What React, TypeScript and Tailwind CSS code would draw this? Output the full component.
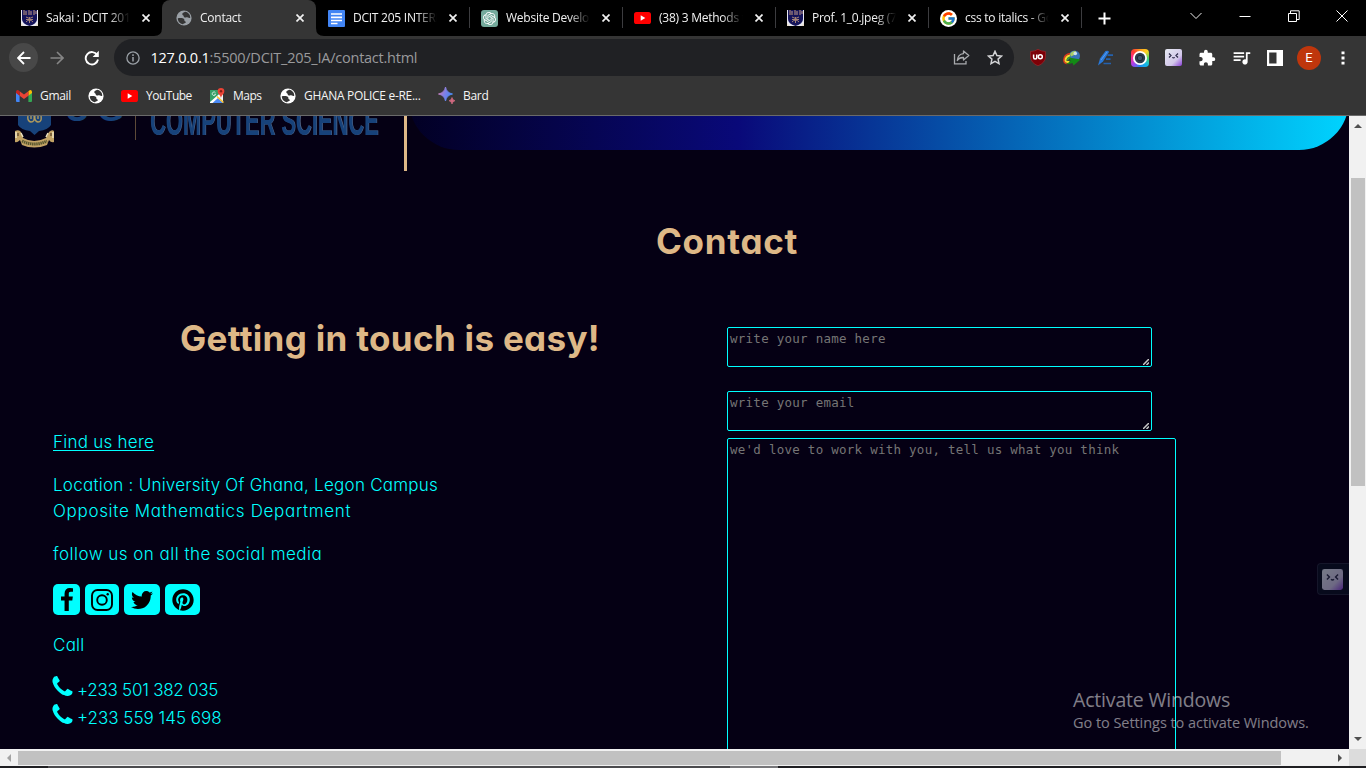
import React from "react";
import { FcGoogle } from "react-icons/fc";
import { SiOpenai } from "react-icons/si";
import { FaPinterest } from "react-icons/fa";
import { MdExtension, MdOutlineQueueMusic } from "react-icons/md";

const ui = "font-['Open_Sans','Noto_Sans',sans-serif]";

function Crest() {
  return (
    <svg width="17" height="16" viewBox="0 0 17 16">
      <rect width="17" height="16" fill="#e9e9f2" />
      <path d="M1 0H16V9Q16 14 8.5 16Q1 14 1 9Z" fill="#14135a" />
      <path d="M3 0V5M5 1V5M8 0V5M10 1V5M13 0V5M15 1V4" stroke="#c39a7a" strokeWidth="1" />
      <path d="M4 2H6M8 3H11M13 3H15" stroke="#6b5a8a" strokeWidth="1" />
      <path d="M5 7Q8.500 10 12 7M5 12Q8.500 8 12 12M8.500 7V13M5 9.500H12" stroke="#a58478" strokeWidth="1" fill="none" />
      <path d="M0 13L2.500 16H0ZM17 13L14.500 16H17Z" fill="#e8dcc8" />
    </svg>
  );
}

function Globe({ color, land }: { color: string; land: string }) {
  return (
    <svg width="16" height="16" viewBox="0 0 16 16">
      <circle cx="8" cy="8" r="7.600" fill={color} />
      <path d="M9.300 1.800C7.800 2.300 6.200 3 6.300 4.200C6.400 5.300 7.800 5.200 7.700 6.200C7.600 7.100 8.900 7.600 10 7.400C11.500 7.100 12.400 8.400 14.200 8C14.500 5 12.400 2.400 9.300 1.800Z" fill={land} />
      <path d="M1.800 8.200C4 8.100 6.600 7.600 8 8.900C8.900 9.800 7.900 10.900 9 11.200C10.300 11.500 10.200 12.900 8.600 13.200C7.600 13.400 7.200 14.100 7 14.200C4 13.700 1.800 11.400 1.800 8.200Z" fill={land} />
    </svg>
  );
}

function DocsIcon() {
  return (
    <svg width="17" height="17" viewBox="0 0 17 17">
      <rect width="17" height="17" rx="1" fill="#4285f4" />
      <path d="M3 4H14M3 7.300H14M3 10.500H14M3 13.500H9.500" stroke="#fff" strokeWidth="1.700" />
    </svg>
  );
}

function YouTubeIcon() {
  return (
    <svg width="17" height="12" viewBox="0 0 17 12">
      <rect width="17" height="12" rx="2.600" fill="#f00" />
      <path d="M6.700 3.300L11.300 6L6.700 8.700Z" fill="#fff" />
    </svg>
  );
}

function GmailIcon() {
  return (
    <svg width="16" height="12" viewBox="0 0 16 12">
      <path d="M0 2V11Q0 12 1 12H3.600V5.500Z" fill="#4285f4" />
      <path d="M16 2V11Q16 12 15 12H12.400V5.500Z" fill="#34a853" />
      <path d="M12.400 1.200V5.700L16 3V1.700Q15.500 -.8 13.200 .6Z" fill="#fbbc04" />
      <path d="M3.600 1.200L8 4.500L12.400 1.200V5.700L8 9L3.600 5.700Z" fill="#ea4335" />
      <path d="M3.600 1.200V5.700L0 3V1.700Q.5 -.8 2.800 .6Z" fill="#c5221f" />
    </svg>
  );
}

function MapsIcon() {
  return (
    <svg width="17" height="16" viewBox="0 0 17 16">
      <rect x="1" y="2" width="13" height="13" rx="1" fill="#f1f3f4" />
      <path d="M1 2H10L12 5L1 15Z" fill="#34a068" />
      <path d="M2.500 15L8 9L14 15Z" fill="#4a8af4" />
      <path d="M1 14L12.500 4L14 5.500L3.500 15H1Z" fill="#fff" />
      <path d="M8 8.500L14.500 14.500" stroke="#fbc22c" strokeWidth="1.500" />
      <path d="M6.500 4.800A1.800 1.800 0 1 0 6.700 6.300H5.200" fill="none" stroke="#e8f5ee" strokeWidth=".8" />
      <path d="M12 0A3.300 3.300 0 0 1 15.300 3.500C15.300 6 12.500 7 12 10C11.500 7 8.700 6 8.700 3.500A3.300 3.300 0 0 1 12 0Z" fill="#ea4335" />
      <circle cx="12" cy="3.300" r="1.200" fill="#811f18" />
    </svg>
  );
}

function BardIcon() {
  return (
    <svg width="18" height="17" viewBox="0 0 18 17">
      <defs>
        <linearGradient id="bard" x1="0" x2="1" y1=".3" y2=".7">
          <stop offset="0" stopColor="#c97bb0" />
          <stop offset=".45" stopColor="#7c80e8" />
          <stop offset="1" stopColor="#3f8cf0" />
        </linearGradient>
      </defs>
      <path d="M7.500 0Q8.500 5.800 14.500 7Q8.500 8.200 7.500 14Q6.500 8.200 .5 7Q6.500 5.800 7.500 0Z" fill="url(#bard)" stroke="url(#bard)" />
      <path d="M14 10.500Q14.500 13.200 17 13.700Q14.500 14.200 14 17Q13.500 14.200 11 13.700Q13.500 13.200 14 10.500Z" fill="#d06a80" stroke="#d06a80" strokeWidth=".7" />
    </svg>
  );
}

function Face({ size }: { size: number }) {
  return (
    <svg width={size} height={size} viewBox="0 0 17 17">
      <defs>
        <linearGradient id="face" x1="0" y1="0" x2="1" y2="1">
          <stop offset=".1" stopColor="#e2e4f0" />
          <stop offset=".65" stopColor="#d3c8ea" />
          <stop offset="1" stopColor="#8a3fd8" />
        </linearGradient>
      </defs>
      <rect width="17" height="17" rx="2" fill="url(#face)" />
      <path d="M4 4.500L6 6.500L4 8.500M13 4.500L11 6.500L13 8.500M7.300 8.300Q8.500 9.500 9.700 8.300" fill="none" stroke="#2c2a48" strokeWidth="1.200" />
    </svg>
  );
}

function CloseIcon() {
  return (
    <svg width="8" height="8" viewBox="0 0 8 8">
      <path d="M.5 .5L7.500 7.500M7.500 .5L.5 7.500" stroke="#f1f1f1" strokeWidth="1.700" />
    </svg>
  );
}

const tabs = [
  { icon: <Crest />, label: "Sakai : DCIT 201" },
  { icon: <Globe color="#9aa0a6" land="#353535" />, label: "Contact", active: true },
  { icon: <DocsIcon />, label: "DCIT 205 INTERIM" },
  {
    icon: (
      <span className="flex size-[17px] items-center justify-center rounded-[3px] bg-[#74aa9c]">
        <SiOpenai size={13} color="#fff" />
      </span>
    ),
    label: "Website Develop",
  },
  { icon: <YouTubeIcon />, label: "(38) 3 Methods t" },
  { icon: <Crest />, label: "Prof. 1_0.jpeg (7" },
  {
    icon: (
      <span className="flex size-[17px] items-center justify-center rounded-full bg-white">
        <FcGoogle size={15} />
      </span>
    ),
    label: "css to italics - Go",
  },
];

function TabStrip() {
  return (
    <div className={`flex h-9 bg-black pl-[9px] text-[12px] text-[#f1f1f1] ${ui}`}>
      {tabs.map((t, i) => (
        <div
          key={i}
          className={
            t.active
              ? "relative flex h-9 w-[154px] shrink-0 items-center rounded-t-[8px] bg-[#353535] pl-[13px]"
              : "relative flex h-9 w-[153px] shrink-0 items-center pl-[12px]"
          }
        >
          {t.active && (
            <svg className="absolute bottom-0 -left-2" width="170" height="8" viewBox="0 0 170 8">
              <path d="M0 8Q8 8 8 0V8ZM162 0Q162 8 170 8H162Z" fill="#353535" />
            </svg>
          )}
          <span className="flex w-[17px] shrink-0 justify-center">{t.icon}</span>
          <span className="ml-2 w-[84px] overflow-hidden tracking-[-0.25px] whitespace-nowrap [mask-image:linear-gradient(to_right,black_75%,transparent)]">
            {t.label}
          </span>
          <span className="ml-[12px]">
            <CloseIcon />
          </span>
          {i > 1 && <span className="absolute top-[7px] right-[-1px] h-[21px] w-px bg-[#3c3c3f]" />}
        </div>
      ))}
      <div className="flex flex-1 items-center">
        <svg className="ml-[17px]" width="13" height="13" viewBox="0 0 13 13">
          <path d="M6.500 .5V12.500M.5 6.500H12.500" stroke="#fff" strokeWidth="2" />
        </svg>
        <svg className="-mt-[5px] ml-[79px]" width="12" height="8" viewBox="0 0 12 8">
          <path d="M.5 1L6 6.500L11.500 1" fill="none" stroke="#eee" />
        </svg>
        <svg className="-mt-[5px] ml-[37px]" width="12" height="12" viewBox="0 0 12 12">
          <path d="M.5 6.500H11.500" stroke="#fff" />
        </svg>
        <svg className="-mt-[5px] ml-[37px]" width="12" height="12" viewBox="0 0 12 12">
          <path d="M.5 3.500H8.500V11.500H.5ZM2.500 3V.8H11.200V9.500H9" fill="none" stroke="#fff" />
        </svg>
        <svg className="-mt-[5px] ml-[36px]" width="12" height="12" viewBox="0 0 12 12">
          <path d="M.5 .5L11.500 11.500M11.500 .5L.5 11.500" stroke="#fff" />
        </svg>
      </div>
    </div>
  );
}

function Ext({ children }: { children: React.ReactNode }) {
  return <span className="flex w-[33.900px] shrink-0 justify-center">{children}</span>;
}

function Toolbar() {
  return (
    <div className="flex h-[43px] items-center bg-[#353535]">
      <span className="ml-[9px] flex size-[29px] items-center justify-center rounded-full bg-[#484848]">
        <svg width="14" height="14" viewBox="0 0 14 14">
          <path d="M13.500 7H1.500M7 1L1 7L7 13" fill="none" stroke="#fff" strokeWidth="1.800" />
        </svg>
      </span>
      <svg className="ml-[12px]" width="14" height="14" viewBox="0 0 14 14">
        <path d="M.5 7H12.500M7 1L13 7L7 13" fill="none" stroke="#868686" strokeWidth="1.600" />
      </svg>
      <svg className="ml-[20px]" width="16" height="16" viewBox="0 0 16 16">
        <path d="M13.200 5A6.200 6.200 0 1 0 14 9.500" fill="none" stroke="#fff" strokeWidth="1.900" />
        <path d="M14.800 .8V7H8.600Z" fill="#fff" />
      </svg>
      <div className="ml-[14px] flex h-[37px] w-[900px] shrink-0 items-center rounded-full bg-[#202124]">
        <svg className="ml-[12px]" width="14" height="14" viewBox="0 0 14 14">
          <circle cx="7" cy="7" r="6.100" fill="none" stroke="#9aa0a6" strokeWidth="1.300" />
          <path d="M7 6V10.500M7 3.300V4.900" stroke="#9aa0a6" strokeWidth="1.500" />
        </svg>
        <span className={`ml-[10.500px] text-[14.500px] tracking-[-0.240px] text-[#9a9a9c] ${ui}`}>
          <span className="text-white">127.0.0.1</span>:5500/DCIT_205_IA/contact.html
        </span>
        <svg className="ml-auto" width="17" height="15" viewBox="0 0 17 15">
          <path d="M1.500 4V13.800H13V11" fill="none" stroke="#a9abae" strokeWidth="1.300" />
          <path d="M10.500 1L15.800 5.500L10.500 10V7.500C7.500 7.300 5.500 8.500 4.300 10.500C4.600 6.500 6.700 4 10.500 3.600Z" fill="none" stroke="#a9abae" strokeWidth="1.300" strokeLinejoin="round" />
        </svg>
        <svg className="mr-[11px] ml-[17px]" width="16" height="15" viewBox="0 0 16 15">
          <path d="M8 1.300L9.900 5.500L14.500 6L11.100 9.100L12 13.600L8 11.300L4 13.600L4.900 9.100L1.500 6L6.100 5.500Z" fill="none" stroke="#d2d3d5" strokeWidth="1.500" />
        </svg>
      </div>
      <div className="ml-[7px] flex items-center">
        <Ext>
          <svg width="16" height="17" viewBox="0 0 16 17">
            <path d="M8 .3Q11 2.400 15.500 2.500V8Q15 14 8 16.800Q1 14 .5 8V2.500Q5 2.400 8 .3Z" fill="#7d0007" stroke="#a12b30" strokeWidth=".6" />
            <path d="M3.600 5.500V8.500Q3.600 10 5.200 10Q6.800 10 6.800 8.500V5.500" fill="none" stroke="#fff" strokeWidth="1.500" />
            <circle cx="10.300" cy="7.800" r="2" fill="none" stroke="#fff" strokeWidth="1.500" />
          </svg>
        </Ext>
        <Ext>
          <svg width="18" height="16" viewBox="0 0 18 16">
            <circle cx="11.500" cy="6" r="5.500" fill="#3874b8" />
            <path d="M7 4Q9 .5 13 1L12 4.500L8 6.500Z" fill="#a9cf64" />
            <circle cx="12.300" cy="3.500" r="1.800" fill="#cfe1ee" />
            <path d="M7 3.500Q.6 5 .9 10.500Q1.200 14.300 6 13" fill="none" stroke="#e13a1d" strokeWidth="1.600" />
            <path d="M7 5.500Q2.300 6.500 2.500 10.700Q3 12.500 6.500 11.800" fill="none" stroke="#f6dc2d" strokeWidth="2" />
            <path d="M7.500 7Q4.500 8 4.500 10.500" fill="none" stroke="#3aa83a" strokeWidth="1.400" />
            <path d="M6 7.500L17.500 9.500L10.500 15.500L9.500 13Q5 14.800 3 13.700Q7 12.500 7.500 10.500Z" fill="#138a15" />
          </svg>
        </Ext>
        <Ext>
          <svg width="17" height="16" viewBox="0 0 17 16">
            <path d="M1 15.500L3 8.500L8.500 1Q11.500 .2 12 2L6 11.500Z" fill="#2878d8" />
            <path d="M10.500 5.200H16M9 9.200H13.500" stroke="#2461ad" strokeWidth="1.800" />
            <path d="M6.500 13.500H14" stroke="#2461ad" strokeWidth="1.500" />
            <path d="M4 10L10 2" stroke="#5c9df0" />
          </svg>
        </Ext>
        <Ext>
          <span className="flex size-[18px] items-center justify-center rounded-[4px] bg-[conic-gradient(from_0deg,#ff9a1f,#ffd21f,#4cd964,#12b7e8,#1d8bf0,#a044f0,#ff2d9b,#ff3b30,#ff9a1f)]">
            <svg width="14" height="14" viewBox="0 0 14 14">
              <circle cx="7" cy="7" r="7" fill="#fff" />
              <circle cx="7" cy="7" r="5.200" fill="#2d3c4c" />
              <circle cx="7" cy="7" r="2.700" fill="#3e5266" stroke="#1d2833" />
            </svg>
          </span>
        </Ext>
        <Ext><Face size={17} /></Ext>
        <Ext><MdExtension size={18} color="#fff" /></Ext>
        <Ext><MdOutlineQueueMusic size={21} color="#fff" /></Ext>
        <Ext>
          <svg width="16" height="16" viewBox="0 0 16 16">
            <path d="M0 0H16V16H0ZM2.200 2.500V13.500H9.500V2.500Z" fill="#fff" fillRule="evenodd" />
          </svg>
        </Ext>
        <Ext>
          <span className="flex size-6 items-center justify-center rounded-full bg-[#bf360c] font-['Roboto',sans-serif] text-[13px] text-white">
            E
          </span>
        </Ext>
        <Ext>
          <svg width="4" height="14" viewBox="0 0 4 14">
            <path d="M.5 .5H3.500V3.300H.5ZM.5 5.600H3.500V8.400H.5ZM.5 10.700H3.500V13.500H.5Z" fill="#fff" />
          </svg>
        </Ext>
      </div>
    </div>
  );
}

function Bookmarks() {
  return (
    <div className={`flex h-9 items-center bg-[#353535] pb-[3px] pl-[16px] text-[12px] tracking-[-0.300px] whitespace-nowrap text-[#f4f4f4] ${ui}`}>
      <span className="flex w-[72px] items-center gap-2"><GmailIcon />Gmail</span>
      <span className="flex w-[33px] items-center"><Globe color="#fff" land="#353535" /></span>
      <span className="flex w-[88px] items-center gap-2 tracking-[-0.500px]"><YouTubeIcon />YouTube</span>
      <span className="flex w-[71px] items-center gap-[7px] tracking-[-0.500px]"><MapsIcon />Maps</span>
      <span className="flex w-[158px] items-center gap-2"><Globe color="#fff" land="#353535" />GHANA POLICE e-RE...</span>
      <span className="flex items-center gap-[7px]"><BardIcon />Bard</span>
    </div>
  );
}

function Header() {
  return (
    <div className="flex h-[55px] shrink-0">
      <div className="flex w-[404px] shrink-0 overflow-hidden pl-[14px]">
        <svg className="shrink-0" width="42" height="33" viewBox="0 0 42 33">
          <path d="M4 0H37V9Q34 14 25 15L20.500 19L16 15Q7 14 4 9Z" fill="#17427a" />
          <path d="M14 0Q13 5 17 6Q21 6 20 0M21 0Q20 5 24 6Q28 6 27 0M17 0V3M24 0V3" fill="none" stroke="#b09a5c" strokeWidth="1.400" />
          <path d="M1 15Q5 13 7 16L9 22Q20 28 32 22L35 16Q38 13 40 15V26Q37 27 35 24L33 29Q20 34 8 29L6 24Q3 27 1 26Z" fill="#c2a265" />
          <path d="M8 25Q20 31 33 25" fill="none" stroke="#58572f" strokeWidth="3" strokeDasharray="1.500 .6" />
          <path d="M2 16V22M39 16V22M7 17L9 21M34 17L32 21" stroke="#f0e3c0" strokeWidth="1.500" />
          <path d="M4 17V20M37 17V20" stroke="#513b25" strokeWidth="1.200" />
        </svg>
        <div className="ml-[9px] h-[30px] w-[70px] shrink-0">
          <span className="-mt-[24px] block font-['Liberation_Sans',sans-serif] text-[34px] leading-[34px] font-bold tracking-[8px] text-[#17427a]">
            UG
          </span>
        </div>
        <div className="h-[24px] w-px bg-[#5d4a38]" />
        <div className="ml-[14px] h-[30px] w-[240px]">
          <span className="-mt-[15px] block origin-top-left scale-x-[0.547] font-['Liberation_Sans',sans-serif] text-[40px] leading-[40px] font-bold whitespace-nowrap text-[#17427a] [text-shadow:1px_0_0_#566a8c]">
            COMPUTER SCIENCE
          </span>
        </div>
      </div>
      <div className="w-[3px] shrink-0 bg-[#deb887]" />
      <div className="ml-[2px] flex h-[34px] flex-1 flex-col justify-end overflow-hidden">
        <div className="h-[100px] shrink-0 rounded-b-[50px] bg-[linear-gradient(90deg,#020024_0%,#090979_35%,#00d4ff_100%)]" />
      </div>
    </div>
  );
}

const heading = "font-['Inter',sans-serif] [font-feature-settings:'cv11'] text-[35px] leading-[54px] font-bold text-[#deb887]";

const badge = "flex h-[31px] items-center justify-center rounded-[5px] bg-[#00ffff]";

function PhoneLine({ children }: { children: React.ReactNode }) {
  return (
    <div className="flex h-[28px] items-center">
      <svg className="-mt-[7px] -ml-px" width="21" height="21" viewBox="160 128 1472 1472">
        <path
          fill="#00ffff"
          d="M1600 1240q0 27-10 70.500t-21 68.500q-21 50-122 106-94 51-186 51-27 0-53-3.500t-57.500-12.500-47-14.500-55.500-20.500-49-18q-98-35-175-83-127-79-264-216t-216-264q-48-77-83-175-3-9-18-49t-20.500-55.500-14.500-47-12.500-57.500-3.500-53q0-92 51-186 56-101 106-122 25-11 68.500-21t70.500-10q14 0 21 3 18 6 53 76 11 19 30 54t35 63.500 31 53.500q3 4 17.500 25t21.500 35.500 7 28.500q0 20-28.500 50t-62 55-62 53-28.500 46q0 9 5 22.500t8.500 20.500 14 24 11.500 19q76 137 174 235t235 174q2 1 19 11.500t24 14 20.500 8.500 22.500 5q18 0 46-28.500t53-62 55-62 50-28.500q14 0 28.500 7t35.500 21.500 25 17.500q25 15 53.500 31t63.500 35 54 30q70 35 76 53 3 7 3 21z"
        />
      </svg>
      <span className="ml-[4px]">{children}</span>
    </div>
  );
}

function ContactInfo() {
  return (
    <div className="flex w-[674px] shrink-0 flex-col pl-[53px] font-['Inter',sans-serif] text-[17px] leading-[26px] font-light tracking-[0.250px] text-[#00ffff] [font-feature-settings:'cv11']">
      <h2 className={`${heading} ml-[127px] tracking-[0.320px] whitespace-nowrap`}>Getting in touch is easy!</h2>
      <a className="mt-[64px] self-start underline decoration-1 underline-offset-2">Find us here</a>
      <p className="mt-[17px]">
        Location : University Of Ghana, Legon Campus
        <br />
        <span className="tracking-[0.680px]">Opposite Mathematics Department</span>
      </p>
      <p className="mt-[17px] tracking-[0.480px]">follow us on all the social media</p>
      <div className="mt-[17px] flex gap-[5px]">
        <span className={`${badge} w-[27px]`}>
          <svg width="12" height="23" viewBox="479 0 864 1664">
            <path d="M1343 12v264h-157q-86 0-116 36t-30 108v189h293l-39 296h-254v759h-306v-759h-255v-296h255v-218q0-186 104-288.500t277-102.500q147 0 228 12z" />
          </svg>
        </span>
        <span className={`${badge} w-[34px]`}>
          <svg width="22" height="22" viewBox="0 0 22 22" fill="none" stroke="#000">
            <rect x="1" y="1" width="20" height="20" rx="5.500" strokeWidth="1.900" />
            <circle cx="11" cy="11" r="4.800" strokeWidth="1.900" />
            <circle cx="16.700" cy="5.300" r="1.200" fill="#000" stroke="none" />
          </svg>
        </span>
        <span className={`${badge} w-[36px]`}>
          <svg width="22" height="18" viewBox="108 256 1576 1280">
            <path d="M1684 408q-67 98-162 167 1 14 1 42 0 130-38 259.500t-115.500 248.500-184.500 210.500-258 146-323 54.500q-271 0-496-145 35 4 78 4 225 0 401-138-105-2-188-64.500t-114-159.500q33 5 61 5 43 0 85-11-112-23-185.500-111.500t-73.500-205.500v-4q68 38 146 41-66-44-105-115t-39-154q0-88 44-163 121 149 294.500 238.500t371.500 99.500q-8-38-8-74 0-134 94.500-228.500t228.500-94.500q140 0 236 102 109-21 205-78-37 115-142 178 93-10 186-50z" />
          </svg>
        </span>
        <span className={`${badge} w-[35px]`}>
          <FaPinterest size={22} color="#000" />
        </span>
      </div>
      <p className="mt-[17px]">Call</p>
      <div className="mt-[18px]">
        <PhoneLine><span className="tracking-[-0.250px]">+233 501 382 035</span></PhoneLine>
        <PhoneLine><span className="tracking-[0px]">+233 559 145 698</span></PhoneLine>
      </div>
    </div>
  );
}

const field =
  "block shrink-0 resize-none overflow-hidden rounded-[2px] border border-[#00ffff] bg-transparent px-[2px] py-[3px] font-['DejaVu_Sans_Mono',monospace] text-[12.500px] tracking-[0.260px] leading-[16px] text-white placeholder:text-[#757575]";

function Grip() {
  return (
    <svg className="absolute right-[3px] bottom-[2px]" width="6" height="6" viewBox="0 0 6 6">
      <path d="M0 6L6 0M3.500 6L6 3.500" stroke="#c8c8c8" strokeWidth="1.500" />
    </svg>
  );
}

function ContactForm() {
  return (
    <form className="flex flex-col pt-[16px] pl-[53px]">
      <div className="relative w-[425px]">
        <textarea className={`${field} h-[40px] w-[425px]`} placeholder="write your name here" />
        <Grip />
      </div>
      <div className="relative mt-[24px] w-[425px]">
        <textarea className={`${field} h-[40px] w-[425px]`} placeholder="write your email" />
        <Grip />
      </div>
      <textarea className={`${field} mt-[7px] h-[400px] w-[449px]`} placeholder="we'd love to work with you, tell us what you think" />
    </form>
  );
}

function Arrow({ className }: { className: string }) {
  return (
    <svg className={className} width="8" height="4" viewBox="0 0 8 4">
      <path d="M0 4L4 0L8 4Z" fill="currentColor" />
    </svg>
  );
}

export default function App() {
  return (
    <div className="relative flex h-[768px] w-[1366px] flex-col overflow-hidden bg-[#050014]">
      <TabStrip />
      <Toolbar />
      <Bookmarks />
      <div className="h-px shrink-0 bg-[#6a6a6a]" />
      <div className="flex h-[633px] shrink-0">
        <main className="flex w-[1349px] flex-col overflow-hidden bg-[#050014]">
          <Header />
          <h1 className={`${heading} mt-[43px] ml-[656px] shrink-0 tracking-[0.700px]`}>Contact</h1>
          <div className="mt-[43px] flex h-[437px] shrink-0">
            <ContactInfo />
            <ContactForm />
          </div>
        </main>
        <div className="flex w-[17px] flex-col items-center bg-[#f1f1f1]">
          <Arrow className="mt-[8px] text-[#505050]" />
          <div className="mt-[50px] h-[308px] w-[14px] bg-[#c1c1c1]" />
          <Arrow className="mt-auto mb-[8px] rotate-180 text-[#505050]" />
        </div>
      </div>
      <div className="flex h-[17px] shrink-0 items-center bg-[#f1f1f1]">
        <Arrow className="ml-[5px] -rotate-90 text-[#a3a3a3]" />
        <div className="ml-[5px] h-[14px] w-[1263px] bg-[#c1c1c1]" />
        <Arrow className="ml-[55px] rotate-90 text-[#505050]" />
        <div className="ml-auto h-[17px] w-[17px] bg-[#dcdcdc]" />
      </div>
      <div className="flex h-[2px] shrink-0 bg-[#1f1f22]">
        <div className="ml-[48px] w-[682px] bg-[#4b4b4e]" />
        <div className="w-[48px] bg-[#77777a]" />
      </div>
      <div className="absolute top-[563px] left-[1317px] flex h-[32px] w-[32px] items-center rounded-l-[4px] border border-r-0 border-[#15162a] bg-[#070a1c] pl-[4px]">
        <span className="opacity-50">
          <Face size={21} />
        </span>
      </div>
      <div className={`pointer-events-none absolute top-[686px] left-[1073px] whitespace-nowrap text-white/50 ${ui}`}>
        <div className="text-[19.500px] leading-[27px] tracking-[-0.180px]">Activate Windows</div>
        <div className="text-[14.500px] leading-[20px] tracking-[-0.050px]">Go to Settings to activate Windows.</div>
      </div>
    </div>
  );
}
